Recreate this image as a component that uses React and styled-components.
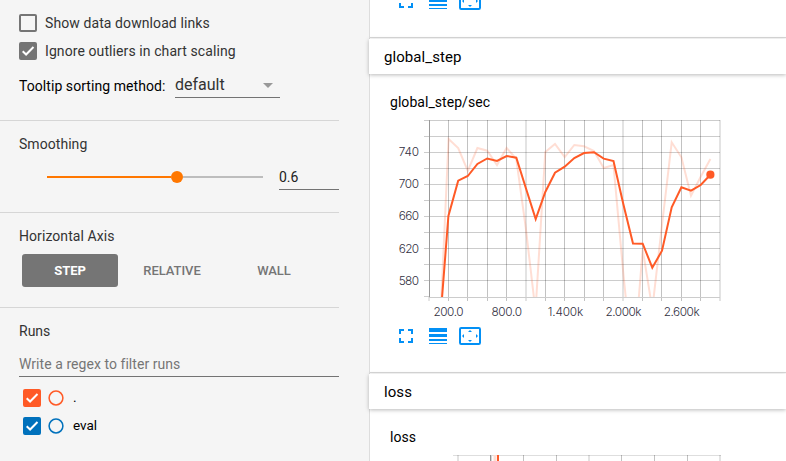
import React from "react";
import styled, { createGlobalStyle } from "styled-components";

const GlobalStyle = createGlobalStyle`
  *, *::before, *::after { box-sizing: border-box; }
  html, body { margin: 0; padding: 0; overflow: hidden; }
  body { font-family: Roboto, "Liberation Sans", sans-serif; font-size: 14px; color: #000; }
`;

const Page = styled.main`
  display: flex;
  width: 786px;
  height: 461px;
  overflow: hidden;
  background: #fff;
`;

const Sidebar = styled.aside`
  display: flex;
  flex-direction: column;
  flex: 0 0 370px;
  padding-right: 30px;
  background: #f5f5f5;
  border-right: 1px solid #ddd;
`;

const Panel = styled.section`
  display: flex;
  flex-direction: column;
  flex: 0 0 ${(p) => p.$height}px;
  padding: ${(p) => p.$top}px 0 0 19px;
  border-bottom: ${(p) => (p.$last ? "none" : "1px solid #d6d6d6")};
`;

const PanelTitle = styled.h3`
  margin: 0;
  font-size: 14px;
  font-weight: 400;
  line-height: 20px;
  letter-spacing: ${(p) => p.$spacing || 0}px;
  color: #333;
`;

const CheckRow = styled.label`
  display: flex;
  align-items: center;
  gap: 8px;
  height: 28px;
  line-height: 20px;
  letter-spacing: ${(p) => p.$spacing}px;
  color: #333;
`;

const Box = styled.span`
  display: flex;
  flex: 0 0 18px;
  height: 18px;
  border: 2px solid ${(p) => p.$color};
  border-radius: 2px;
  background: ${(p) => (p.$checked ? p.$color : "transparent")};
`;

const SelectRow = styled.div`
  display: flex;
  align-items: flex-start;
  margin-top: 8px;
  gap: 9px;
`;

const SelectLabel = styled.span`
  width: 147px;
  padding-top: 3px;
  line-height: 20px;
  white-space: nowrap;
  letter-spacing: 0.06px;
`;

const Select = styled.div`
  display: flex;
  justify-content: space-between;
  width: 105px;
  height: 25px;
  padding: 0 6px 0 0;
  border-bottom: 1px solid #737373;
  font-size: 16px;
  line-height: 24px;
  color: #333;
`;

const Caret = styled.span`
  align-self: flex-start;
  margin: 10px 1px 0 0;
  border: 5px solid transparent;
  border-top-color: #999;
  border-bottom: 0;
`;

const SliderRow = styled.div`
  display: flex;
  align-items: flex-start;
  gap: 16px;
  padding: 11px 0 0 28px;
`;

const Track = styled.div`
  display: flex;
  align-items: center;
  width: 216px;
  height: 24px;
`;

const Fill = styled.span`
  width: 124px;
  height: 2px;
  background: #ff7700;
`;

const Knob = styled.span`
  width: 12px;
  height: 12px;
  border-radius: 50%;
  background: #ff7700;
`;

const Rest = styled.span`
  flex: 1;
  height: 2px;
  background: #bdbdbd;
`;

const NumberField = styled.div`
  width: 60px;
  height: 25px;
  border-bottom: 1px solid #737373;
  line-height: 25px;
  color: #212121;
`;

const ModeGroup = styled.div`
  display: flex;
  gap: 6px;
  padding: 8px 0 0 3px;
`;

const ModeButton = styled.button`
  width: 96px;
  height: 33px;
  padding: 0;
  border: 0;
  border-radius: 3px;
  background: ${(p) => (p.$active ? "#757575" : "transparent")};
  color: ${(p) => (p.$active ? "#fff" : "#757575")};
  font: ${(p) => (p.$active ? 700 : 500)} 13px/33px Roboto, sans-serif;
  letter-spacing: ${(p) => (p.$active ? -0.1 : -0.05)}px;
`;

const RegexField = styled.div`
  height: 24px;
  margin-top: 12px;
  border-bottom: 1px solid #737373;
  line-height: 23px;
  letter-spacing: 0.05px;
  color: #757575;
`;

const RunList = styled.div`
  display: flex;
  flex-direction: column;
  padding: 7px 0 0 4px;
`;

const RunRow = styled.div`
  display: flex;
  align-items: center;
  height: 28px;
`;

const RunDot = styled.svg`
  display: block;
  flex: none;
  margin: 0 9px 0 7px;
`;

const RunName = styled.span`
  font-size: 13.5px;
  line-height: 18px;
  padding-bottom: 3px;
`;

const Content = styled.div`
  display: flex;
  flex-direction: column;
  flex: 1;
  min-width: 0;
`;

const CategoryBody = styled.div`
  display: flex;
  flex-direction: column;
  flex: 0 0 ${(p) => p.$height}px;
  padding-left: 20px;
  border-bottom: 1px solid #d8d8d8;
`;

const CategoryHeader = styled.h2`
  position: relative;
  flex: 0 0 35px;
  min-height: 0;
  margin: 1px 0 0 -1px;
  padding-left: 15px;
  background: #fff;
  box-shadow: 0 1px 4px rgba(0, 0, 0, 0.28);
  font-size: 15px;
  font-weight: 400;
  line-height: 37px;
  letter-spacing: 0.08px;
`;

const ChartTitle = styled.div`
  height: 18px;
  margin-top: 19px;
  line-height: 18px;
  letter-spacing: 0.05px;
`;

const Chart = styled.svg`
  display: block;
  flex: none;
  margin-top: ${(p) => p.$top}px;
`;

const AxisLabel = styled.text`
  font-family: Inter, sans-serif;
  font-size: 11.8px;
  font-weight: 300;
  fill: #32313f;
`;

const Toolbar = styled.div`
  display: flex;
  align-items: center;
  height: 18px;
  margin: ${(p) => p.$top}px 0 0 9px;
`;

const Icon = styled.svg`
  display: block;
  flex: none;
  margin-right: ${(p) => p.$gap || 0}px;
`;

function CheckBox({ color, checked }) {
  return (
    <Box $color={color} $checked={checked}>
      {checked && (
        <Icon width="14" height="14" viewBox="0 0 14 14">
          <path d="M1.7 7.2L5.1 10.5L12.5 3" fill="none" stroke="#fff" strokeWidth="2" />
        </Icon>
      )}
    </Box>
  );
}

function RunCircle({ color }) {
  return (
    <RunDot width="16" height="16" viewBox="0 0 16 16">
      <circle cx="8" cy="8" r="6.9" fill="none" stroke={color} strokeWidth="1.5" />
    </RunDot>
  );
}

function ChartTools({ top }) {
  return (
    <Toolbar $top={top}>
      <Icon $gap={16} width="14" height="14" viewBox="0 0 14 14">
        <path d="M1 5V1H5M9 1H13V5M13 9V13H9M5 13H1V9" fill="none" stroke="#0390f5" strokeWidth="2" />
      </Icon>
      <Icon $gap={12} width="18" height="18" viewBox="0 0 18 18">
        <path d="M0 1H18V5H0ZM0 7H18V10H0ZM0 12H18V14H0ZM0 16H18V17H0Z" fill="#0390f5" />
      </Icon>
      <Icon width="22" height="18" viewBox="0 0 22 18">
        <rect x="1" y="1" width="20" height="16" rx="1.2" fill="none" stroke="#0390f5" strokeWidth="2" />
        <path d="M11 3L13 5H9ZM11 15L13 13H9ZM3 9L5 7V11ZM19 9L17 7V11Z" fill="#0390f5" />
      </Icon>
    </Toolbar>
  );
}

const smoothed =
  "442,298 448.4,216 458.2,180.7 467.8,176 477.4,164 487.2,158.5 497,161 506.6,156 516.3,157.7 526,188.5 535.7,219 545.3,192 555,172.7 564.7,166.7 574.3,158 584,153 594,152.2 603.7,158.6 613.5,161 623.3,204 633,243.4 642.7,243.7 652.3,267.7 662,250.7 671.7,207.3 681.4,187.3 691,190.7 700.7,185 710.4,174.7";
const raw =
  "441.3,300 448.6,139 458.2,148 467.8,171 477.4,148 487.2,150.7 497,165 506.6,148 516.3,159 525.8,228 535.5,311 545.3,152 555,144 564.7,157 574.3,145 584,146.3 594,151 603.7,168 613.5,165 623.3,273 633,370 642.7,249.5 652.3,309 662,225 671.7,142.3 681.4,157.3 691,195.7 700.7,176.7 710.4,159";

const gridX = [448.5, 467.5, 487.5, 506.5, 526, 545.5, 564.5, 584.5, 603.5, 623, 642.5, 661.5, 681.5, 700.5, 720];
const gridY = [120.5, 136.5, 152.5, 168.5, 184.5, 200.5, 216.5, 232.5, 248.5, 264.5, 280.5];
const wide = [526, 623, 720, 458, 589];

function GridLine({ x, y1, y2 }) {
  const isWide = wide.includes(x);
  return (
    <path
      d={`M${x} ${y1}V${y2}`}
      stroke="#000"
      strokeOpacity={isWide ? 0.11 : 0.24}
      strokeWidth={isWide ? 2 : 1}
    />
  );
}

function StepChart() {
  return (
    <Chart $top={4} width="340" height="205" viewBox="390 115 340 205">
      <defs>
        <clipPath id="plot">
          <rect x="429" y="120" width="292" height="177" />
        </clipPath>
      </defs>
      {gridY.map((y) => (
        <path key={y} d={`M424 ${y}H720`} stroke="#000" strokeOpacity="0.2" />
      ))}
      <path d="M424 296.5H429" stroke="#d0d0d0" />
      {gridX.map((x) => (
        <GridLine key={x} x={x} y1={120} y2={301} />
      ))}
      <path d="M429 297.5H720" stroke="#ccc" />
      <path d="M429.5 120V297" stroke="#999" />
      <path d="M429 297V301" stroke="#ccc" />
      <g clipPath="url(#plot)" fill="none" strokeWidth="2">
        <polyline points={raw} stroke="#ff5a26" strokeOpacity="0.2" />
        <polyline points={smoothed} stroke="#ff5a26" />
      </g>
      <circle cx="710.4" cy="174.7" r="4.1" fill="#ff5a26" />
      {[740, 700, 660, 620, 580].map((v, i) => (
        <AxisLabel key={v} x="419" y={156 + i * 32.2} textAnchor="end" textLength="20.3">
          {v}
        </AxisLabel>
      ))}
      {[
        ["200.0", 448.5, 30],
        ["800.0", 506.7, 30.5],
        ["1.400k", 565.5, 35.5],
        ["2.000k", 623.5, 36],
        ["2.600k", 681.7, 36],
      ].map(([label, x, w]) => (
        <AxisLabel key={label} x={x} y="316" textAnchor="middle" textLength={w}>
          {label}
        </AxisLabel>
      ))}
    </Chart>
  );
}

function LossChart() {
  return (
    <Chart $top={9} width="340" height="6" viewBox="390 455 340 6">
      <path d="M453 455.5H721" stroke="#dedede" />
      {[458, 523.5, 556.5, 589, 621.5, 654.5, 687.5, 720].map((x) => (
        <GridLine key={x} x={x} y1={455} y2={461} />
      ))}
      <path d="M490.5 455V461" stroke="#919191" />
      <path d="M491.5 455V461" stroke="#d5d5d5" />
      <path d="M495 455V461" stroke="#ffded4" strokeWidth="3" />
      <path d="M498 455V461" stroke="#ff5a26" strokeWidth="2" />
    </Chart>
  );
}

export default function App() {
  return (
    <>
      <GlobalStyle />
      <Page>
        <Sidebar>
          <Panel $height={121} $top={9}>
            <CheckRow $spacing={0.09}>
              <CheckBox color="#757575" />
              Show data download links
            </CheckRow>
            <CheckRow $spacing={0.09}>
              <CheckBox color="#757575" checked />
              Ignore outliers in chart scaling
            </CheckRow>
            <SelectRow>
              <SelectLabel>Tooltip sorting method:</SelectLabel>
              <Select>
                default
                <Caret />
              </Select>
            </SelectRow>
          </Panel>
          <Panel $height={92} $top={13}>
            <PanelTitle $spacing={0.05}>Smoothing</PanelTitle>
            <SliderRow>
              <Track>
                <Fill />
                <Knob />
                <Rest />
              </Track>
              <NumberField>0.6</NumberField>
            </SliderRow>
          </Panel>
          <Panel $height={95} $top={13}>
            <PanelTitle $spacing={0.07}>Horizontal Axis</PanelTitle>
            <ModeGroup>
              <ModeButton $active>STEP</ModeButton>
              <ModeButton>RELATIVE</ModeButton>
              <ModeButton>WALL</ModeButton>
            </ModeGroup>
          </Panel>
          <Panel $height={153} $top={13} $last>
            <PanelTitle>Runs</PanelTitle>
            <RegexField>Write a regex to filter runs</RegexField>
            <RunList>
              <RunRow>
                <CheckBox color="#ff5a26" checked />
                <RunCircle color="#ff5a26" />
                <RunName>.</RunName>
              </RunRow>
              <RunRow>
                <CheckBox color="#0071bc" checked />
                <RunCircle color="#0071bc" />
                <RunName>eval</RunName>
              </RunRow>
            </RunList>
          </Panel>
        </Sidebar>
        <Content>
          <CategoryBody $height={38}>
            <ChartTools top={-8} />
          </CategoryBody>
          <CategoryHeader>global_step</CategoryHeader>
          <CategoryBody $height={299}>
            <ChartTitle>global_step/sec</ChartTitle>
            <StepChart />
            <ChartTools top={7} />
          </CategoryBody>
          <CategoryHeader>loss</CategoryHeader>
          <CategoryBody $height={80}>
            <ChartTitle>loss</ChartTitle>
            <LossChart />
          </CategoryBody>
        </Content>
      </Page>
    </>
  );
}
